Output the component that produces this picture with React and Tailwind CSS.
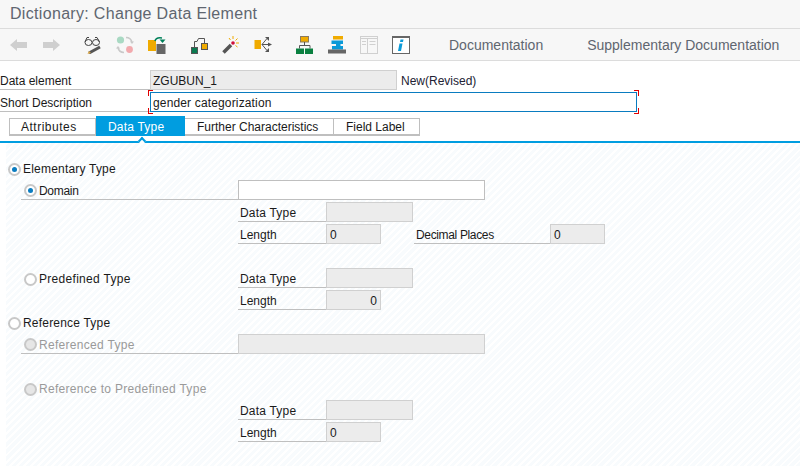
import React from 'react';

const Back = ({ flip }) => (
  <svg width="18" height="14" viewBox="0 0 18 14" className={flip ? '-scale-x-100' : ''}>
    <path d="M0 7 7 1v3h10v6H7v3z" fill="#cfcfcf" />
  </svg>
);

const Glasses = () => (
  <svg width="18" height="18" viewBox="0 0 18 18" fill="none">
    <ellipse cx="4.500" cy="6.500" rx="3.500" ry="3" stroke="#444" />
    <ellipse cx="12" cy="6.500" rx="3.500" ry="3" stroke="#444" />
    <path d="M1 6 3 1.500h2M15.500 6 13 1.500h-2" stroke="#444" />
    <path d="M5 17l11-6" stroke="#555" strokeWidth="3" />
    <path d="M3.500 18 5 15l2 2z" fill="#d9a441" />
  </svg>
);

const Activate = () => (
  <svg width="18" height="18" viewBox="0 0 18 18" fill="none">
    <circle cx="4.500" cy="4" r="3.600" fill="#a9d9c3" />
    <circle cx="13.500" cy="13.500" r="3.400" fill="#f2a9ad" />
    <path d="M10 1.500q5 0 6 5" stroke="#c9c9c9" strokeWidth="1.600" />
    <path d="M14 5.500h4l-2 2.500z" fill="#c9c9c9" />
    <path d="M8 16.500q-5 0-6-5" stroke="#c9c9c9" strokeWidth="1.600" />
    <path d="M0 12.500h4l-2-2.500z" fill="#c9c9c9" />
  </svg>
);

const Transport = () => (
  <svg width="18" height="18" viewBox="0 0 18 18" fill="none">
    <rect x="0" y="4" width="8" height="11" fill="#f0ab00" />
    <rect x="8.500" y="8" width="9" height="10" fill="#666" />
    <path d="M7 5q1-4 7-3" stroke="#00805a" strokeWidth="1.600" />
    <path d="M11.500 3.500h6L14.500 7z" fill="#00805a" />
  </svg>
);

const Where = () => (
  <svg width="18" height="18" viewBox="0 0 18 18" fill="none">
    <rect x="1.500" y="11.500" width="6" height="6" fill="#0a7a50" stroke="#555" />
    <rect x="11.500" y="7.500" width="6" height="6" fill="#f0ab00" stroke="#555" />
    <path d="M4.500 11.500V5.500H7L8.500 2.500H14.500V7.500" stroke="#555" />
  </svg>
);

const Wand = () => (
  <svg width="18" height="18" viewBox="0 0 18 18" fill="none">
    <path d="M1.500 16.500 9 9" stroke="#555" strokeWidth="3.500" />
    <circle cx="11" cy="7" r="1.800" fill="#d00f3c" />
    <path d="M11 0v3M17 7h-3M15.500 2.500l-2 2M7 2l1.500 2M15.500 11l-2-1.500" stroke="#f0ab00" />
  </svg>
);

const Branch = () => (
  <svg width="18" height="18" viewBox="0 0 18 18" fill="none">
    <rect x="0.500" y="4" width="6.500" height="9" fill="#f0ab00" />
    <path d="M8 8.500 13 2.500M8 8.500h8M8 8.500l5 6" stroke="#555" />
    <path d="M11 1h4v4zM14 6.500l4 2-4 2zM15 12v4h-4z" fill="#555" />
  </svg>
);

const Hierarchy = () => (
  <svg width="18" height="18" viewBox="0 0 18 18" fill="none">
    <rect x="4.500" y="0.500" width="8" height="5.500" fill="#f0ab00" stroke="#8a7a60" />
    <path d="M8.500 6v3.500M3.500 12.500v-3h10.500v3" stroke="#555" />
    <rect x="0" y="12.500" width="8" height="5.500" fill="#0a8040" />
    <rect x="9" y="12.500" width="8" height="5.500" fill="#0a8040" />
  </svg>
);

const Stack = () => (
  <svg width="18" height="18" viewBox="0 0 18 18">
    <rect x="5" y="0" width="10" height="3.500" fill="#f0ab00" />
    <path d="M3.500 4.500H15V8H12.500V10H15v3.500H4V10H8V8H3.500z" fill="#0a9ad8" />
    <rect x="0" y="13.500" width="18" height="4" fill="#666" />
  </svg>
);

const Table = () => (
  <svg width="18" height="18" viewBox="0 0 18 18" fill="none" stroke="#d0d0d0">
    <rect x="0.500" y="0.500" width="17" height="17" />
    <path d="M0 2.500h18M7.500 2v16M2 5.500h4M9.500 5.500h6M9.500 8.500h6M2 8.500h4" />
  </svg>
);

const Info = () => (
  <svg width="18" height="18" viewBox="0 0 18 18" fill="none">
    <rect x="0.500" y="0.500" width="17" height="17" fill="#fff" stroke="#666" />
    <path d="M0 1h18" stroke="#666" strokeWidth="2" />
    <path d="M8.500 3.500h3L11 6H8zM7.500 7.500H10.500L9 15H6z" fill="#0a9ad8" />
  </svg>
);

const Radio = ({ on, off }) => (
  <span className={`flex h-[13px] w-[13px] shrink-0 items-center justify-center rounded-full border-2 border-[#c8c8c8] ${off ? 'bg-[#e6e6e6]' : 'bg-white'}`}>
    {on && <span className="h-[5px] w-[5px] rounded-full bg-[#0a7cc0]" />}
  </span>
);

const Box = ({ w, right, children, white, px = 'px-[3px]' }) => (
  <div className={`flex h-5 shrink-0 items-center border pt-[2px] ${px} ${w} ${right ? 'justify-end' : ''} ${white ? 'border-[#bfbfbf] bg-white' : 'border-[#d0d0d0] bg-[#ececec]'}`}>
    {children}
  </div>
);

// label with the grey line under it
const Label = ({ w, pl = 'pl-[2px]', children }) => (
  <div className={`flex h-5 shrink-0 items-center border-b border-[#bfbfbf] pt-[2px] ${pl} ${w}`}>{children}</div>
);

const Row = ({ children, className = '' }) => <div className={`mt-[2px] flex h-5 ${className}`}>{children}</div>;

const RadioText = ({ on, off, tracking = '', flat, children }) => (
  <span className={`flex items-center gap-[2px] ${flat ? '' : 'pt-[2px]'} ${tracking} ${off ? 'text-[#9a9a9a]' : ''}`}>
    <Radio on={on} off={off} />
    {children}
  </span>
);

const DataTypeRow = () => (
  <>
    <Label w="w-[88px]"><span className="tracking-[0.2px]">Data Type</span></Label>
    <Box w="w-[87px]" />
  </>
);

const LengthRow = ({ right }) => (
  <>
    <Label w="w-[88px]">Length</Label>
    <Box w="w-[55px]" right={right}>0</Box>
  </>
);

const Tab = ({ w, pl = 'pl-[12px]', active, children }) => (
  <div className={`flex items-center ${pl} ${w} ${active ? 'relative -mb-[2px] -mt-[3px] h-5 bg-[#009de0] pt-[2px] text-white' : 'h-[15px] border-r border-[#bfbfbf]'}`}>
    {children}
  </div>
);

const App = () => (
  <div className="h-[466px] w-[800px] overflow-hidden bg-white font-['Liberation_Sans',sans-serif] text-[12px] leading-none text-[#1a1a1a]">
    <div className="flex h-[28px] items-center bg-[#f7f7f7] pl-[10px] text-[16px] tracking-[0.32px] text-[#5f6670]">
      Dictionary: Change Data Element
    </div>
    <div className="flex h-[33px] items-center border-y border-[#dcdcdc] bg-[#f7f7f7] pl-[10px]">
      <div className="flex gap-[14px]"><Back /><Back flip /></div>
      <div className="ml-[24px] flex gap-[14px]"><Glasses /><Activate /><Transport /></div>
      <div className="ml-[24px] flex gap-[14px]"><Where /><Wand /><Branch /></div>
      <div className="ml-[24px] flex gap-[14px]"><Hierarchy /><Stack /><Table /><Info /></div>
      <span className="ml-[39px] text-[14px] text-[#5f6670]">Documentation</span>
      <span className="ml-[44px] text-[14px] text-[#5f6670]">Supplementary Documentation</span>
    </div>
    <div className="mt-[9px] flex h-5">
      <Label w="w-[150px]" pl="pl-0">Data element</Label>
      <Box w="w-[247px]" px="px-[2px]">ZGUBUN_1</Box>
      <span className="ml-[4px] flex items-center pt-[2px] text-[#223]">New(Revised)</span>
    </div>
    <Row>
      <Label w="w-[150px]" pl="pl-0">Short Description</Label>
      <div className="relative flex h-5 w-[487px] items-center border border-[#0a7cc0] bg-white px-[2px] pt-[2px] tracking-[0.15px]">
        gender categorization
        <span className="absolute -left-[3px] -top-[3px] h-[6px] w-[5px] border-l border-t border-[#e00000]" />
        <span className="absolute -bottom-[3px] -left-[3px] h-[6px] w-[5px] border-b border-l border-[#e00000]" />
        <span className="absolute -right-[3px] -top-[3px] h-[6px] w-[5px] border-r border-t border-[#e00000]" />
        <span className="absolute -bottom-[3px] -right-[3px] h-[6px] w-[5px] border-b border-r border-[#e00000]" />
      </div>
    </Row>
    <div className="ml-[9px] mt-[6px] flex h-[18px] w-[411px] border border-b-2 border-[#bfbfbf]">
      <Tab w="w-[86px]" pl="pl-[11px]"><span className="tracking-[0.5px]">Attributes</span></Tab>
      <Tab w="w-[89px]" active><span className="tracking-[0.2px]">Data Type</span></Tab>
      <Tab w="w-[149px]">Further Characteristics</Tab>
      <div className="flex h-[15px] flex-1 items-center pl-[12px]">Field Label</div>
    </div>
    <div className="relative mt-[5px] h-[2px] bg-[#009de0]">
      <span className="absolute -top-[3px] left-[139px] h-[6px] w-[6px] rotate-45 border-l-2 border-t-2 border-[#009de0] bg-white" />
    </div>
    <div className="h-[323px] border-l-[6px] border-white bg-[repeating-linear-gradient(135deg,#ffffff_0px,#ffffff_2px,#f8fbfd_2px,#f8fbfd_5px)] pt-[13px]">
      <Row className="items-center pl-[2px]"><RadioText on tracking="tracking-[0.2px]">Elementary Type</RadioText></Row>
      <Row className="pl-[15px]">
        <Label w="w-[217px]" pl="pl-[3px]"><RadioText flat on tracking="-tracking-[0.3px]">Domain</RadioText></Label>
        <Box w="w-[247px]" white />
      </Row>
      <Row className="pl-[232px]"><DataTypeRow /></Row>
      <Row className="pl-[232px]">
        <LengthRow />
        <div className="w-[33px]" />
        <Label w="w-[136px]"><span className="-tracking-[0.35px]">Decimal Places</span></Label>
        <Box w="w-[55px]">0</Box>
      </Row>
      <Row />
      <Row className="pl-[18px]">
        <div className="flex w-[214px] items-center"><RadioText tracking="tracking-[0.3px]">Predefined Type</RadioText></div>
        <DataTypeRow />
      </Row>
      <Row className="pl-[232px]"><LengthRow right /></Row>
      <Row className="items-center pl-[2px]"><RadioText tracking="tracking-[0.2px]">Reference Type</RadioText></Row>
      <Row className="pl-[15px]">
        <Label w="w-[217px]" pl="pl-[3px]"><RadioText flat off tracking="tracking-[0.3px]">Referenced Type</RadioText></Label>
        <Box w="w-[247px]" />
      </Row>
      <Row />
      <Row className="items-center pl-[18px]"><RadioText off tracking="tracking-[0.3px]">Reference to Predefined Type</RadioText></Row>
      <Row className="pl-[232px]"><DataTypeRow /></Row>
      <Row className="pl-[232px]"><LengthRow /></Row>
    </div>
  </div>
);

export default App;
